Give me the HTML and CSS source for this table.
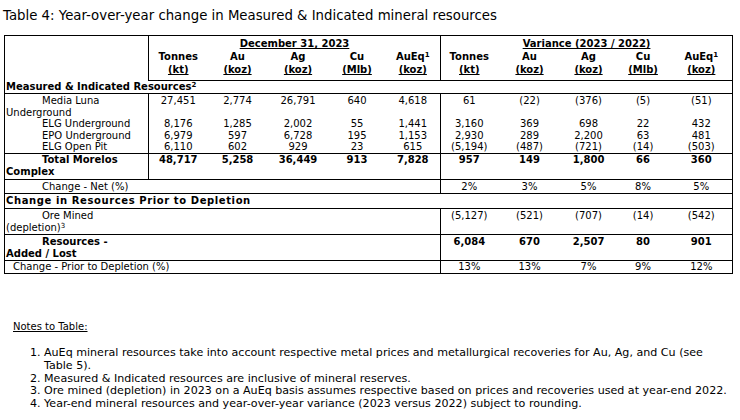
FILE: index.html
```html
<!DOCTYPE html>
<html>
<head>
<meta charset="utf-8">
<link rel="stylesheet" href="styles.css">
</head>
<body>
<div class="page">
<p class="title">Table 4: Year-over-year change in Measured &amp; Indicated mineral resources</p>
<table class="res">
<colgroup>
<col class="c-lab"><col class="c-d1"><col class="c-d2"><col class="c-d3"><col class="c-d4"><col class="c-d5">
<col class="c-v1"><col class="c-v2"><col class="c-v3"><col class="c-v4"><col class="c-v5">
</colgroup>
<thead>
<tr class="h1"><th rowspan="3" class="lab br"></th><th colspan="5"><u>December 31, 2023</u></th><th colspan="5" class="bl"><u>Variance (2023 / 2022)</u></th></tr>
<tr class="h2"><th>Tonnes</th><th>Au</th><th>Ag</th><th>Cu</th><th>AuEq<sup>1</sup></th><th class="bl">Tonnes</th><th>Au</th><th>Ag</th><th>Cu</th><th>AuEq<sup>1</sup></th></tr>
<tr class="h3"><th><u>(kt)</u></th><th><u>(koz)</u></th><th><u>(koz)</u></th><th><u>(Mlb)</u></th><th><u>(koz)</u></th><th class="bl"><u>(kt)</u></th><th><u>(koz)</u></th><th><u>(koz)</u></th><th><u>(Mlb)</u></th><th><u>(koz)</u></th></tr>
</thead>
<tbody>
<tr class="sec sec-mi"><td colspan="11" class="b">Measured &amp; Indicated Resources<sup>2</sup></td></tr>
<tr class="r-item r-first"><td class="lab br ind">Media Luna<br>Underground</td><td>27,451</td><td>2,774</td><td>26,791</td><td>640</td><td>4,618</td><td class="bl vt">61</td><td>(22)</td><td>(376)</td><td>(5)</td><td>(51)</td></tr>
<tr class="r-item"><td class="lab br ind">ELG Underground</td><td>8,176</td><td>1,285</td><td>2,002</td><td>55</td><td>1,441</td><td class="bl vt">3,160</td><td>369</td><td>698</td><td>22</td><td>432</td></tr>
<tr class="r-item"><td class="lab br ind">EPO Underground</td><td>6,979</td><td>597</td><td>6,728</td><td>195</td><td>1,153</td><td class="bl vt">2,930</td><td>289</td><td>2,200</td><td>63</td><td>481</td></tr>
<tr class="r-item r-last"><td class="lab br ind">ELG Open Pit</td><td>6,110</td><td>602</td><td>929</td><td>23</td><td>615</td><td class="bl vt">(5,194)</td><td>(487)</td><td>(721)</td><td>(14)</td><td>(503)</td></tr>
<tr class="r-total b"><td class="lab br ind">Total Morelos<br>Complex</td><td>48,717</td><td>5,258</td><td>36,449</td><td>913</td><td>7,828</td><td class="bl vt">957</td><td>149</td><td>1,800</td><td>66</td><td>360</td></tr>
<tr class="r-net"><td colspan="6" class="lab ind">Change - Net (%)</td><td class="bl vt">2%</td><td>3%</td><td>5%</td><td>8%</td><td>5%</td></tr>
<tr class="sec sec-cr"><td colspan="11" class="b">Change in Resources Prior to Depletion</td></tr>
<tr class="r-ore"><td colspan="6" class="lab ind">Ore Mined<br>(depletion)<sup>3</sup></td><td class="bl vt">(5,127)</td><td>(521)</td><td>(707)</td><td>(14)</td><td>(542)</td></tr>
<tr class="r-add b"><td colspan="6" class="lab ind">Resources -<br>Added / Lost</td><td class="bl vt">6,084</td><td>670</td><td>2,507</td><td>80</td><td>901</td></tr>
<tr class="r-pct"><td colspan="6" class="lab ind-s">Change - Prior to Depletion (%)</td><td class="bl vt">13%</td><td>13%</td><td>7%</td><td>9%</td><td>12%</td></tr>
</tbody>
</table>

<div class="notes">
<p class="notes-h"><u>Notes to Table:</u></p>
<ol class="notes-list">
<li>AuEq mineral resources take into account respective metal prices and metallurgical recoveries for Au, Ag, and Cu (see Table 5).</li>
<li>Measured &amp; Indicated resources are inclusive of mineral reserves.</li>
<li>Ore mined (depletion) in 2023 on a AuEq basis assumes respective based on prices and recoveries used at year-end 2022.</li>
<li>Year-end mineral resources and year-over-year variance (2023 versus 2022) subject to rounding.</li>
</ol>
</div>
</div>
</body>
</html>
```

FILE: styles.css
```css
html, body {
  margin: 0;
  padding: 0;
  background: #fff;
  color: #000;
  font-family: "DejaVu Sans", Verdana, sans-serif;
}

.page {
  padding-top: 8px;
}

.title {
  margin: 0 0 12px 3px;
  font-size: 13.3px;
  line-height: 15px;
}

.res {
  margin-left: 4px;
  border-collapse: collapse;
  table-layout: fixed;
  width: 728px;
  border: 1px solid #000;
  font-size: 10px;
}

.c-lab { width: 144px; }
.c-d1 { width: 59px; }
.c-d2 { width: 60px; }
.c-d3 { width: 61px; }
.c-d4 { width: 57px; }
.c-d5 { width: 55px; }
.c-v1 { width: 57px; }
.c-v2 { width: 64px; }
.c-v3 { width: 54px; }
.c-v4 { width: 55px; }
.c-v5 { width: 62px; }

.res th,
.res td {
  padding: 0 1px;
  text-align: center;
  vertical-align: top;
  white-space: nowrap;
}

.res th {
  font-weight: bold;
  line-height: 13px;
}

.res .h1 th { padding-top: 1px; }
.res .h3 th { padding-bottom: 4px; }

.res .lab { text-align: left; }
.res .br { border-right: 1px solid #000; }
.res .bl { border-left: 1px solid #000; }
.res .b, .res .b td { font-weight: bold; }
.res .ind { text-indent: 36px; }
.res .ind-s { text-indent: 7px; }

.res sup {
  font-size: 7px;
  line-height: 0;
  vertical-align: 3px;
}

.res thead tr.h3 th { border-bottom: 1px solid #000; }

.sec td {
  text-align: left;
  border-bottom: 1px solid #000;
}
.sec-mi td { line-height: 12px; }
.sec-cr td {
  line-height: 14px;
  letter-spacing: 0.6px;
}

.r-item td { line-height: 11.6px; }
.r-first td { padding-top: 1px; }
.r-last td { border-bottom: 1px solid #000; }

.r-total td {
  line-height: 12.5px;
  border-bottom: 1px solid #000;
}

.r-net td {
  line-height: 13px;
  border-bottom: 1px solid #000;
}

.r-ore td {
  line-height: 12px;
  padding-top: 1px;
  border-bottom: 1px solid #000;
}

.r-add td {
  line-height: 12.25px;
  padding-top: 1px;
  border-bottom: 1px solid #000;
}

.r-pct td { line-height: 12px; }

.notes {
  margin-top: 46px;
}

.notes-h {
  margin: 0 0 0 13px;
  font-size: 10px;
  line-height: 13px;
}

.notes-list {
  margin: 14px 9px 0 0;
  padding-left: 44px;
  font-size: 11.1px;
  line-height: 12.6px;
}
```
